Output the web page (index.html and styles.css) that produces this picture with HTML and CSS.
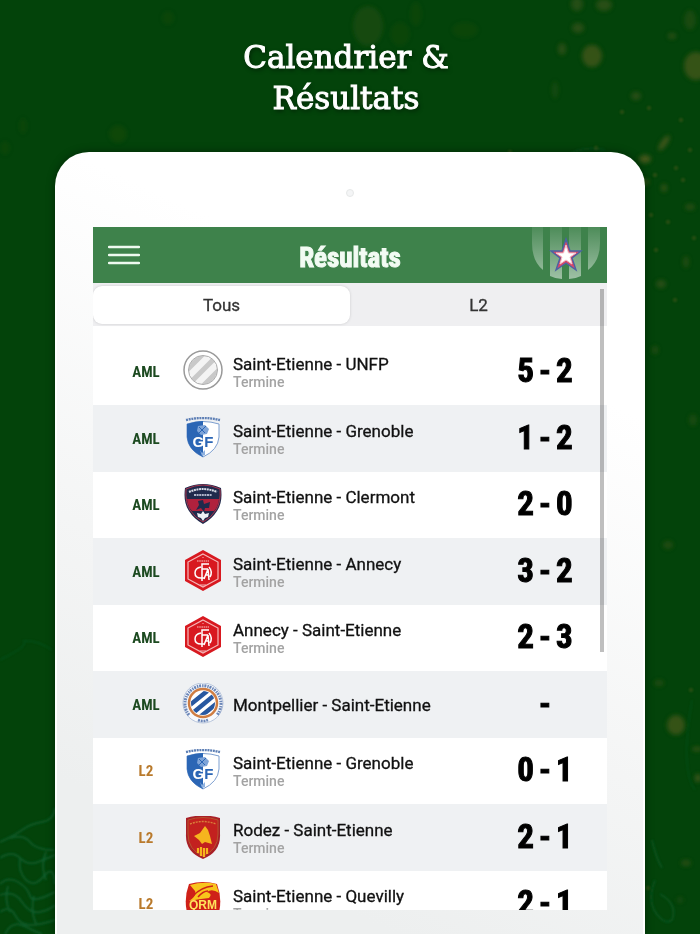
FILE: index.html
```html
<!DOCTYPE html>
<html lang="fr">
<head>
    <meta charset="UTF-8">
    <meta name="viewport" content="width=device-width, initial-scale=1.0">
    <title>Calendrier &amp; Résultats</title>
    <link rel="stylesheet" href="styles.css">
</head>
<body>
    <!-- Fond : taches et filaments -->
    <svg class="backdrop" viewBox="0 0 700 934" preserveAspectRatio="none" aria-hidden="true">
        <defs>
            <filter id="soft" x="-20%" y="-20%" width="140%" height="140%"><feGaussianBlur stdDeviation="2"/></filter>
            <filter id="thin" x="-20%" y="-20%" width="140%" height="140%"><feGaussianBlur stdDeviation="0.9"/></filter>
        </defs>
        <g class="spots" filter="url(#soft)">
            <ellipse cx="368" cy="26" rx="15" ry="20" opacity=".25"/>
            <ellipse cx="400" cy="34" rx="10" ry="12" opacity=".12"/>
            <ellipse cx="416" cy="14" rx="6" ry="12" opacity=".12"/>
            <ellipse cx="465" cy="30" rx="13" ry="8" opacity=".12"/>
            <ellipse cx="364" cy="99" rx="9" ry="7" opacity=".25"/>
            <ellipse cx="592" cy="56" rx="10" ry="11" opacity=".7"/>
            <ellipse cx="562" cy="49" rx="4" ry="6" opacity=".5"/>
            <ellipse cx="578" cy="28" rx="6" ry="5" opacity=".5"/>
            <ellipse cx="577" cy="4" rx="6" ry="7" opacity=".45"/>
            <ellipse cx="604" cy="5" rx="8" ry="6" opacity=".5"/>
            <ellipse cx="696" cy="66" rx="12" ry="14" opacity=".7"/>
            <ellipse cx="690" cy="20" rx="6" ry="10" opacity=".3"/>
            <ellipse cx="672" cy="36" rx="4" ry="3" opacity=".5"/>
            <ellipse cx="636" cy="96" rx="5" ry="4" opacity=".5"/>
            <ellipse cx="555" cy="90" rx="3" ry="9" opacity=".25"/>
            <ellipse cx="664" cy="143" rx="3" ry="9" transform="rotate(35 664 143)" opacity=".8"/>
            <ellipse cx="645" cy="159" rx="6" ry="4" opacity=".9"/>
            <ellipse cx="642" cy="182" rx="8" ry="3" opacity=".6"/>
            <ellipse cx="618" cy="176" rx="4" ry="4" opacity=".6"/>
            <ellipse cx="664" cy="188" rx="3" ry="4" opacity=".6"/>
            <ellipse cx="690" cy="207" rx="5" ry="3" opacity=".5"/>
            <ellipse cx="661" cy="284" rx="5" ry="4" opacity=".5"/>
            <ellipse cx="686" cy="262" rx="3" ry="6" opacity=".4"/>
            <ellipse cx="185" cy="172" rx="9" ry="14" opacity=".18"/>
            <ellipse cx="118" cy="134" rx="9" ry="9" opacity=".15"/>
            <ellipse cx="268" cy="182" rx="5" ry="4" opacity=".4"/>
            <ellipse cx="313" cy="193" rx="4" ry="5" opacity=".5"/>
            <ellipse cx="234" cy="170" rx="3" ry="3" opacity=".35"/>
            <ellipse cx="444" cy="172" rx="3" ry="4" opacity=".35"/>
            <ellipse cx="168" cy="18" rx="6" ry="7" opacity=".12"/>
            <ellipse cx="23" cy="126" rx="4" ry="8" opacity=".12"/>
            <ellipse cx="5" cy="148" rx="5" ry="7" opacity=".12"/>
            <ellipse cx="676" cy="725" rx="9" ry="10" opacity=".7"/>
            <ellipse cx="659" cy="683" rx="5" ry="3" opacity=".4"/>
            <ellipse cx="697" cy="749" rx="5" ry="2" opacity=".7"/>
            <ellipse cx="698" cy="778" rx="3" ry="4" opacity=".8"/>
            <ellipse cx="686" cy="863" rx="5" ry="3" opacity=".5"/>
            <ellipse cx="668" cy="545" rx="5" ry="4" opacity=".4"/>
            <ellipse cx="693" cy="420" rx="4" ry="6" opacity=".3"/>
            <ellipse cx="655" cy="350" rx="3" ry="4" opacity=".4"/>
            <ellipse cx="680" cy="900" rx="3" ry="3" opacity=".3"/>
        </g>
        <g class="spots" filter="url(#thin)" opacity=".6">
            <circle cx="557" cy="168" r="2"/><circle cx="548" cy="177" r="2"/><circle cx="510" cy="152" r="2"/>
            <circle cx="574" cy="161" r="2"/><circle cx="596" cy="148" r="2"/><circle cx="608" cy="178" r="2"/>
            <circle cx="628" cy="170" r="3"/><circle cx="655" cy="175" r="2"/><circle cx="676" cy="168" r="2"/>
            <circle cx="690" cy="150" r="2"/><circle cx="681" cy="120" r="2"/><circle cx="649" cy="108" r="2"/>
            <circle cx="622" cy="112" r="2"/><circle cx="683" cy="180" r="2"/><circle cx="651" cy="215" r="2"/>
            <circle cx="668" cy="222" r="2"/><circle cx="694" cy="238" r="2"/><circle cx="656" cy="250" r="2"/>
            <circle cx="675" cy="300" r="2"/><circle cx="648" cy="888" r="2"/><circle cx="691" cy="690" r="2"/>
        </g>
        <g class="strands" filter="url(#thin)">
            <path d="M492 200 Q512 182 530 184 T560 165 T605 150" opacity=".5"/>
            <path d="M0 660 Q10 655 18 650 T24 641 Q38 640 52 650" opacity=".4"/>
            <path d="M0 842 Q14 836 22 830 T42 822 T55 808 M10 838 Q24 834 30 842 T54 850"/>
            <path d="M0 858 Q12 850 20 858 T38 862 T55 855 M20 858 Q18 872 26 880 T44 876 T55 884"/>
            <path d="M0 884 Q8 876 18 882 T30 896 T55 892 M0 895 Q14 890 22 902 T40 912 T55 905"/>
            <path d="M0 912 Q10 905 15 915 T30 925 T55 920 M5 934 Q12 920 24 926 T42 934 M8 886 Q4 900 10 912 M34 896 Q30 910 36 924 M46 852 Q40 866 46 880"/>
            <path d="M652 840 Q656 858 662 868 M655 880 Q648 898 654 910 Q664 926 672 920 Q678 904 660 894" opacity=".7"/>
            <path d="M692 700 Q680 770 695 790" opacity=".3"/>
        </g>
    </svg>

    <!-- Écussons des clubs -->
    <svg class="sprites" aria-hidden="true">
        <symbol id="unfp" viewBox="0 0 44 44">
            <clipPath id="unfpClip"><circle cx="22" cy="20" r="14"/></clipPath>
            <circle cx="22" cy="20" r="19" fill="#fff" stroke="#999" stroke-width="1.5"/>
            <g clip-path="url(#unfpClip)">
                <rect width="44" height="44" fill="#f4f4f4"/>
                <path d="M-2 28 26 0M4 38 38 4M16 42 44 14" stroke="#c9c9c9" stroke-width="5"/>
            </g>
            <circle cx="22" cy="20" r="14.5" fill="none" stroke="#aaa"/>
        </symbol>
        <symbol id="grenoble" viewBox="0 0 44 44">
            <path d="M5 3Q22-1 39 3" fill="none" stroke="#5d7fb5" stroke-width="2.4" stroke-dasharray="2 .7"/>
            <path d="M6 7Q22 2 38 7V20Q37 33 22 40 7 33 6 20Z" fill="#fff" stroke="#7d9fd0"/>
            <path d="M6 7Q15 4 22 4V40Q7 33 6 20Z" fill="#2b66b5"/>
            <path d="M17 9 24 8 28 12 26 17 20 18 16 14Z" fill="#7ea4d8"/>
            <path d="M18 10 24 16M25 9 18 16" stroke="#2b66b5"/>
            <path d="M19 33 21 36 24 33 24 38 21 39Z" fill="#8fb2e0"/>
        </symbol>
        <symbol id="clermont" viewBox="0 0 44 44">
            <path d="M4 5Q22-3 40 5 42 19 36 28 31 36 22 41 13 36 8 28 2 19 4 5Z" fill="#202a4c"/>
            <path d="M5 6Q22-2 39 6 40 19 35 27 30 35 22 39 14 35 9 27 4 19 5 6Z" fill="none" stroke="#a8354c"/>
            <path d="M6 16H38Q37 24 33 28H11Q7 24 6 16Z" fill="#b0213d"/>
            <path d="M8 9Q22 3 36 9" fill="none" stroke="#d9dce6" stroke-width="2" stroke-dasharray="2 .6"/>
            <path d="M13 12H31" stroke="#aeb3c8" stroke-width="2" stroke-dasharray="2 .6"/>
            <path d="M17 18 22 17 23 21 29 19 28 25 24 25 23 29 20 25 15 27 18 22Z" fill="#202a4c"/>
            <path d="M22 28 24 31 28 30 27 34 24 35 22 38 20 35 17 34 16 30 20 31Z" fill="#eef0f5"/>
        </symbol>
        <symbol id="annecy" viewBox="0 0 44 44">
            <path d="M22 0 40 10V31L22 41 4 31V10Z" fill="#d81920"/>
            <path d="M22 4 37 12V29L22 37 7 29V12Z" fill="none" stroke="#f5b9b9" stroke-width="1.2"/>
            <path d="M16 11H28" stroke="#ef8c8c" stroke-width="1.5" stroke-dasharray="1.6 .6"/>
            <path d="M21 31V14H28M21 19H27M20 17Q14 18 14 23T20 28H24M23 29 27 19 28 30M24 25H28M28 17Q32 22 29 27" fill="none" stroke="#fff" stroke-width="1.5"/>
            <path d="M22 7v1M19 35H25" stroke="#f5b9b9"/>
        </symbol>
        <symbol id="montpellier" viewBox="0 0 44 44">
            <clipPath id="mhscClip"><circle cx="22" cy="20" r="12"/></clipPath>
            <circle cx="22" cy="20" r="20" fill="#f7f9fc" stroke="#b9c6dc"/>
            <path d="M8 32A18 18 0 1 1 36 32" fill="none" stroke="#6c87b8" stroke-width="3" stroke-dasharray="2 1 1.4 .8"/>
            <path d="M17 37Q22 39 27 37" fill="none" stroke="#6c87b8" stroke-width="2.5" stroke-dasharray="2 .8"/>
            <circle cx="22" cy="20" r="14" fill="#fff" stroke="#cf7d42" stroke-width="2.5"/>
            <g clip-path="url(#mhscClip)">
                <path d="M4 26 30 5M7 34 36 10M14 38 40 17" stroke="#2858a0" stroke-width="4.5"/>
            </g>
        </symbol>
        <symbol id="rodez" viewBox="0 0 44 44">
            <path d="M5 2Q22-3 39 2V18Q40 36 22 43 4 36 5 18Z" fill="#a92027"/>
            <path d="M7 4Q22-1 37 4V18Q37 34 22 40 7 34 7 18Z" fill="#c3211f" stroke="#b5552e"/>
            <path d="M9 8Q22 3 35 8" fill="none" stroke="#d9803a" stroke-width="1.4" stroke-dasharray="2 1"/>
            <path d="M24 10 27 14 29 20 31 28 24 26 21 28 18 24 13 20 19 17Z" fill="#f6b51e"/>
            <path d="M17 32V37M20 31V40M23 32V41M26 32V38" stroke="#f6b51e" stroke-width="2.2"/>
        </symbol>
        <symbol id="quevilly" viewBox="0 0 44 44">
            <path d="M8 2Q22-2 36 2 42 18 37 34 30 42 22 42 14 42 7 34 2 18 8 2Z" fill="#cf2118"/>
            <path d="M9 3Q22-1 35 2L38 11Q31 6 26 10 32 12 28 16 18 17 8 19 16 14 14 9Z" fill="#f8c51c"/>
            <path d="M12 14Q20 5 32 4M17 15Q22 9 27 9" fill="none" stroke="#cf2118" stroke-width="1.5"/>
            <path d="M17 32H27" stroke="#fff" stroke-width="1.5"/>
        </symbol>
    </svg>

    <main class="page">
        <h1 class="headline">Calendrier &amp;<br>Résultats</h1>

        <div class="tablet">
            <div class="camera"></div>
            <div class="screen">
                <header class="app-bar">
                    <button class="menu-button" type="button" aria-label="Menu">
                        <svg viewBox="0 0 32 20" width="32" height="20"><path d="M1 2H31M1 10H31M1 18H31" stroke="#eefaf0" stroke-width="2.4" stroke-linecap="round"/></svg>
                    </button>
                    <h2 class="app-title">Résultats</h2>
                    <svg class="club-logo" viewBox="0 0 70 56" aria-hidden="true">
                        <defs>
                            <linearGradient id="stripe" x1="0" y1="0" x2="0" y2="1">
                                <stop offset="0" stop-color="#fff" stop-opacity=".08"/>
                                <stop offset="1" stop-color="#fff" stop-opacity=".5"/>
                            </linearGradient>
                        </defs>
                        <path d="M1 0H12V43Q1 34 1 16ZM19 0H31V52Q25 52 19 49ZM38 0H50V49Q44 52 38 52ZM57 0H69V16Q69 34 57 43Z" fill="url(#stripe)"/>
                        <path d="M35 12 39 24H50L41 31 45 43 35 36 25 43 29 31 20 24H31Z" fill="#d8496a" stroke="#4b62a3" stroke-width="1.4"/>
                        <path d="M35 18 37.500 26H45L39 30 41 37 35 33 29 37 31 30 25 26H32.500Z" fill="#fff" stroke="#f3c3cc"/>
                    </svg>
                </header>

                <nav class="tabs">
                    <button class="tab active" type="button">Tous</button>
                    <button class="tab" type="button">L2</button>
                </nav>

                <ul class="matches">
                    <li class="match">
                        <span class="league aml">AML</span>
                        <svg class="crest" viewBox="0 0 44 44"><use href="#unfp"/></svg>
                        <div class="info"><span class="teams">Saint-Etienne - UNFP</span><span class="status">Termine</span></div>
                        <div class="score"><span>5</span><span>-</span><span>2</span></div>
                    </li>
                    <li class="match">
                        <span class="league aml">AML</span>
                        <svg class="crest" viewBox="0 0 44 44"><use href="#grenoble"/><text x="22" y="30" class="crest-text gf"><tspan class="light">G</tspan>F</text></svg>
                        <div class="info"><span class="teams">Saint-Etienne - Grenoble</span><span class="status">Termine</span></div>
                        <div class="score"><span>1</span><span>-</span><span>2</span></div>
                    </li>
                    <li class="match">
                        <span class="league aml">AML</span>
                        <svg class="crest" viewBox="0 0 44 44"><use href="#clermont"/></svg>
                        <div class="info"><span class="teams">Saint-Etienne - Clermont</span><span class="status">Termine</span></div>
                        <div class="score"><span>2</span><span>-</span><span>0</span></div>
                    </li>
                    <li class="match">
                        <span class="league aml">AML</span>
                        <svg class="crest" viewBox="0 0 44 44"><use href="#annecy"/></svg>
                        <div class="info"><span class="teams">Saint-Etienne - Annecy</span><span class="status">Termine</span></div>
                        <div class="score"><span>3</span><span>-</span><span>2</span></div>
                    </li>
                    <li class="match">
                        <span class="league aml">AML</span>
                        <svg class="crest" viewBox="0 0 44 44"><use href="#annecy"/></svg>
                        <div class="info"><span class="teams">Annecy - Saint-Etienne</span><span class="status">Termine</span></div>
                        <div class="score"><span>2</span><span>-</span><span>3</span></div>
                    </li>
                    <li class="match">
                        <span class="league aml">AML</span>
                        <svg class="crest" viewBox="0 0 44 44"><use href="#montpellier"/></svg>
                        <div class="info"><span class="teams">Montpellier - Saint-Etienne</span></div>
                        <div class="score"><span>-</span></div>
                    </li>
                    <li class="match">
                        <span class="league l2">L2</span>
                        <svg class="crest" viewBox="0 0 44 44"><use href="#grenoble"/><text x="22" y="30" class="crest-text gf"><tspan class="light">G</tspan>F</text></svg>
                        <div class="info"><span class="teams">Saint-Etienne - Grenoble</span><span class="status">Termine</span></div>
                        <div class="score"><span>0</span><span>-</span><span>1</span></div>
                    </li>
                    <li class="match">
                        <span class="league l2">L2</span>
                        <svg class="crest" viewBox="0 0 44 44"><use href="#rodez"/></svg>
                        <div class="info"><span class="teams">Rodez - Saint-Etienne</span><span class="status">Termine</span></div>
                        <div class="score"><span>2</span><span>-</span><span>1</span></div>
                    </li>
                    <li class="match">
                        <span class="league l2">L2</span>
                        <svg class="crest" viewBox="0 0 44 44"><use href="#quevilly"/><text x="22" y="27" class="crest-text qrm">QRM</text></svg>
                        <div class="info"><span class="teams">Saint-Etienne - Quevilly</span><span class="status">Termine</span></div>
                        <div class="score"><span>2</span><span>-</span><span>1</span></div>
                    </li>
                </ul>
                <div class="scroll-thumb"></div>
            </div>
        </div>
    </main>
</body>
</html>
```
FILE: styles.css
```css
* {
    box-sizing: border-box;
}

body {
    margin: 0;
    font-family: Roboto, "Liberation Sans", sans-serif;
    background-color: #03430a;
    overflow: hidden;
}

h1, h2, ul {
    margin: 0;
    padding: 0;
}

.backdrop {
    position: absolute;
    inset: 0;
    width: 100%;
    height: 100%;
}

.spots {
    fill: #4d5a1e;
}

.strands path {
    fill: none;
    stroke: #1a7045;
    stroke-width: 2;
    stroke-opacity: 0.5;
}

.sprites {
    position: absolute;
    width: 0;
    height: 0;
}

.page {
    position: relative;
    height: 100vh;
    display: flex;
    flex-direction: column;
    padding: 37px 55px 0;
}

.headline {
    font-family: "DejaVu Serif", serif;
    font-size: 31px;
    line-height: 41px;
    font-weight: normal;
    color: #fff;
    text-align: center;
    -webkit-text-stroke: 1px #fff;
    text-shadow: 1px 2px 4px rgba(0, 0, 0, 0.6);
    padding-right: 8px;
    margin-bottom: 33px;
}

/* Tablette */
.tablet {
    flex: 1;
    min-height: 0;
    display: flex;
    flex-direction: column;
    padding: 33px 36px 24px;
    border: 2px solid #fff;
    border-top-width: 4px;
    border-bottom: none;
    border-radius: 34px 34px 0 0;
    background: linear-gradient(205deg, #fff 25%, #f4f5f5 60%, #edefef 85%);
    box-shadow: 0 0 8px rgba(0, 0, 0, 0.4);
}

.camera {
    width: 8px;
    height: 8px;
    margin: 0 auto 30px;
    flex: none;
    border: 1px solid #e6e8e8;
    border-radius: 50%;
    background: #f4f5f6;
}

.screen {
    position: relative;
    flex: 1;
    min-height: 0;
    overflow: hidden;
    background: #fff;
}

.app-bar {
    height: 56px;
    display: grid;
    grid-template-columns: 1fr auto 1fr;
    align-items: center;
    padding: 0 6px;
    background: #3e824b;
}

.menu-button {
    display: flex;
    justify-self: start;
    margin-left: 9px;
    padding: 0;
    border: none;
    background: none;
    cursor: pointer;
}

.app-title {
    font-family: "Liberation Sans Narrow", "Roboto Condensed", Roboto, sans-serif;
    font-size: 27px;
    line-height: 32px;
    padding-top: 5px;
    color: #f2fbf3;
    -webkit-text-stroke: 1px #f2fbf3;
}

.club-logo {
    width: 70px;
    height: 56px;
    justify-self: end;
}

.tabs {
    display: flex;
    height: 43px;
    padding: 3px 0 2px;
    background: #efeff1;
}

.tab {
    flex: 1;
    border: none;
    border-radius: 9px;
    background: none;
    font-family: inherit;
    font-size: 17px;
    color: #333;
    -webkit-text-stroke: 0.3px #333;
    cursor: pointer;
}

.tab.active {
    background: #fff;
    box-shadow: 0 0 3px rgba(0, 0, 0, 0.15);
}

/* Liste des matchs */
.matches {
    list-style: none;
    padding-top: 13px;
}

.match {
    height: 66px;
    display: flex;
    align-items: center;
    padding-left: 18px;
}

.match:nth-child(even) {
    height: 67px;
    background: #eff1f3;
}

.league {
    width: 70px;
    font-family: "Liberation Sans Narrow", "Roboto Condensed", Roboto, sans-serif;
    font-size: 15px;
    font-weight: bold;
    text-align: center;
}

.aml {
    color: #1c4a20;
}

.l2 {
    color: #b97a2c;
}

.crest {
    width: 44px;
    height: 44px;
    margin-right: 8px;
}

.crest-text {
    font-family: "Liberation Sans", sans-serif;
    font-weight: bold;
    text-anchor: middle;
}

.gf {
    font-size: 15px;
    fill: #2b66b5;
}

.gf .light {
    fill: #fff;
}

.qrm {
    font-size: 12px;
    fill: #ffe45c;
}

.info {
    flex: 1;
    display: flex;
    flex-direction: column;
}

.teams {
    font-size: 17px;
    line-height: 20px;
    color: #111;
    -webkit-text-stroke: 0.3px #111;
}

.status {
    font-size: 14px;
    line-height: 16px;
    font-weight: 500;
    color: #a3a3a3;
}

.score {
    width: 124px;
    display: flex;
    justify-content: center;
    gap: 5px;
    padding-bottom: 2px;
    font-family: "Liberation Sans Narrow", "Roboto Condensed", Roboto, sans-serif;
    font-size: 33px;
    line-height: 36px;
    font-weight: bold;
    color: #000;
    -webkit-text-stroke: 1px #000;
}

.scroll-thumb {
    position: absolute;
    top: 62px;
    right: 3px;
    width: 4px;
    height: 363px;
    background: rgba(0, 0, 0, 0.25);
}
```
